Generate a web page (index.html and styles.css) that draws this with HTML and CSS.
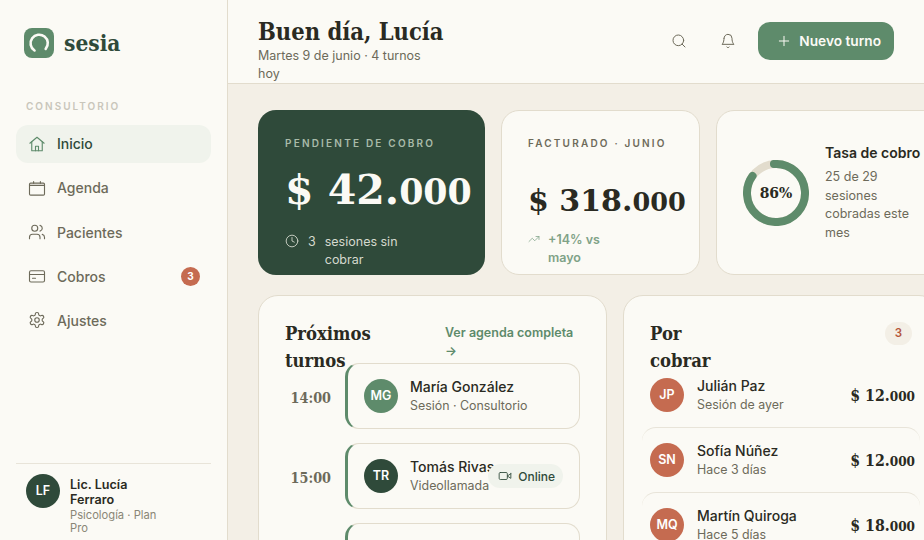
FILE: index.html
```html
<!DOCTYPE html>
<html lang="es">
  <head>
    <meta charset="UTF-8" />
    <meta name="viewport" content="width=device-width, initial-scale=1.0" />
    <title>Sesia</title>
    <link rel="stylesheet" href="styles.css">
  </head>
  <body>
    <aside class="sidebar">
      <div class="brand">
        <div class="brand-mark">
          <svg viewBox="0 0 30 30" width="30" height="30" fill="none" stroke="#fbfaf5" stroke-width="2.6" stroke-linecap="round"><path d="M10.5 22.5a8.6 8.6 0 1 1 11.2-1.6"/></svg>
        </div>
        <span class="brand-name">sesia</span>
      </div>
      <p class="nav-label">CONSULTORIO</p>
      <nav class="nav">
        <a class="nav-item active">
          <svg class="icon" viewBox="0 0 24 24"><path d="M2.5 11 12 3l9.5 8"/><path d="M5 9v12h14V9"/><path d="M10 21v-6h4v6"/></svg>
          Inicio
        </a>
        <a class="nav-item">
          <svg class="icon" viewBox="0 0 24 24"><rect x="2" y="5.5" width="20" height="16" rx="1.5"/><path d="M7.5 3.5v2M16.5 3.5v2M2 8.5h20"/></svg>
          Agenda
        </a>
        <a class="nav-item">
          <svg class="icon" viewBox="0 0 24 24"><path d="M16 21v-2a4 4 0 0 0-4-4H6a4 4 0 0 0-4 4v2"/><circle cx="9" cy="7" r="4"/><path d="M22 21v-2a4 4 0 0 0-3-3.87"/><path d="M16 3.13a4 4 0 0 1 0 7.75"/></svg>
          Pacientes
        </a>
        <a class="nav-item">
          <svg class="icon" viewBox="0 0 24 24"><rect x="2" y="5" width="20" height="15" rx="2"/><path d="M2 10h20M6 15h4"/></svg>
          Cobros
          <span class="nav-badge">3</span>
        </a>
        <a class="nav-item">
          <svg class="icon" viewBox="0 0 24 24"><path d="M12.22 2h-.44a2 2 0 0 0-2 2v.18a2 2 0 0 1-1 1.73l-.43.25a2 2 0 0 1-2 0l-.15-.08a2 2 0 0 0-2.73.73l-.22.38a2 2 0 0 0 .73 2.73l.15.1a2 2 0 0 1 1 1.72v.51a2 2 0 0 1-1 1.74l-.15.09a2 2 0 0 0-.73 2.73l.22.38a2 2 0 0 0 2.73.73l.15-.08a2 2 0 0 1 2 0l.43.25a2 2 0 0 1 1 1.73V20a2 2 0 0 0 2 2h.44a2 2 0 0 0 2-2v-.18a2 2 0 0 1 1-1.73l.43-.25a2 2 0 0 1 2 0l.15.08a2 2 0 0 0 2.73-.73l.22-.39a2 2 0 0 0-.73-2.73l-.15-.08a2 2 0 0 1-1-1.74v-.5a2 2 0 0 1 1-1.74l.15-.09a2 2 0 0 0 .73-2.73l-.22-.38a2 2 0 0 0-2.73-.73l-.15.08a2 2 0 0 1-2 0l-.43-.25a2 2 0 0 1-1-1.73V4a2 2 0 0 0-2-2z"/><circle cx="12" cy="12" r="3"/></svg>
          Ajustes
        </a>
      </nav>
      <div class="profile">
        <div class="avatar dark">LF</div>
        <div class="profile-text">
          <p class="profile-name">Lic. Lucía Ferraro</p>
          <p class="profile-plan">Psicología · Plan Pro</p>
        </div>
      </div>
    </aside>

    <div class="content">
      <header class="topbar">
        <div class="greeting">
          <h1>Buen día, Lucía</h1>
          <p>Martes 9 de junio · 4 turnos hoy</p>
        </div>
        <div class="actions">
          <button class="icon-btn"><svg class="icon" viewBox="0 0 24 24"><circle cx="11" cy="11" r="8"/><path d="m21 21-4.3-4.3"/></svg></button>
          <button class="icon-btn"><svg class="icon" viewBox="0 0 24 24"><path d="M6 8a6 6 0 0 1 12 0c0 7 3 9 3 9H3s3-2 3-9"/><path d="M10.3 21a1.94 1.94 0 0 0 3.4 0"/></svg></button>
          <button class="new-btn"><svg class="icon" viewBox="0 0 24 24"><path d="M5 12h14M12 5v14"/></svg>Nuevo turno</button>
        </div>
      </header>

      <main class="main">
        <section class="stats">
          <div class="stat stat-dark">
            <p class="stat-label">PENDIENTE DE COBRO</p>
            <p class="stat-value">$ 42.<span class="os">000</span></p>
            <div class="stat-note">
              <svg class="icon" viewBox="0 0 24 24"><circle cx="12" cy="12" r="10"/><polyline points="12 6 12 12 16 14"/></svg>
              <span class="note-count">3</span>
              <span class="note-text">sesiones sin cobrar</span>
            </div>
          </div>
          <div class="stat">
            <p class="stat-label">FACTURADO · JUNIO</p>
            <p class="stat-value small">$ 318.<span class="os">000</span></p>
            <div class="stat-note up">
              <svg class="icon" viewBox="0 0 24 24"><polyline points="22 7 13.5 15.5 8.5 10.5 2 17"/><polyline points="16 7 22 7 22 13"/></svg>
              <span>+14% vs mayo</span>
            </div>
          </div>
          <div class="stat stat-rate">
            <div class="ring">
              <svg viewBox="0 0 66 66" width="66" height="66" fill="none" stroke-width="8">
                <circle cx="33" cy="33" r="29" stroke="#e2dccd"/>
                <circle class="ring-value" cx="33" cy="33" r="29" stroke="#5e8b6b" stroke-linecap="round" stroke-dasharray="156.7 182.2"/>
              </svg>
              <span class="ring-text">86%</span>
            </div>
            <div class="rate-text">
              <h3>Tasa de cobro</h3>
              <p>25 de 29 sesiones cobradas este mes</p>
            </div>
          </div>
        </section>

        <section class="panels">
          <div class="panel">
            <div class="panel-head">
              <h2 class="panel-title">Próximos turnos</h2>
              <a class="panel-link">Ver agenda completa →</a>
            </div>
            <div class="appts">
              <div class="appt">
                <span class="appt-time"><span class="os">14:00</span></span>
                <div class="appt-card">
                  <div class="avatar green">MG</div>
                  <div class="appt-info">
                    <p class="name">María González</p>
                    <p class="sub">Sesión · Consultorio</p>
                  </div>
                </div>
              </div>
              <div class="appt">
                <span class="appt-time"><span class="os">15:00</span></span>
                <div class="appt-card">
                  <div class="avatar dark">TR</div>
                  <div class="appt-info">
                    <p class="name">Tomás Rivas</p>
                    <p class="sub">Videollamada</p>
                  </div>
                  <span class="pill">
                    <svg class="icon" viewBox="0 0 24 24"><path d="m22 8-6 4 6 4V8Z"/><rect x="2" y="6" width="14" height="12" rx="2"/></svg>
                    Online
                  </span>
                </div>
              </div>
              <div class="appt">
                <span class="appt-time"></span>
                <div class="appt-card"></div>
              </div>
            </div>
          </div>

          <div class="panel panel-side">
            <div class="panel-head">
              <h2 class="panel-title narrow">Por cobrar</h2>
              <span class="count">3</span>
            </div>
            <div class="debts">
              <div class="debt">
                <div class="avatar clay">JP</div>
                <div class="debt-info">
                  <p class="name">Julián Paz</p>
                  <p class="sub">Sesión de ayer</p>
                </div>
                <span class="amount">$ 12.<span class="os">000</span></span>
              </div>
              <div class="debt">
                <div class="avatar clay">SN</div>
                <div class="debt-info">
                  <p class="name">Sofía Núñez</p>
                  <p class="sub">Hace 3 días</p>
                </div>
                <span class="amount">$ 12.<span class="os">000</span></span>
              </div>
              <div class="debt">
                <div class="avatar clay">MQ</div>
                <div class="debt-info">
                  <p class="name">Martín Quiroga</p>
                  <p class="sub">Hace 5 días</p>
                </div>
                <span class="amount">$ 18.<span class="os">000</span></span>
              </div>
            </div>
          </div>
        </section>
      </main>
    </div>
  </body>
</html>
```

FILE: styles.css
```css
* {
  margin: 0;
  padding: 0;
  box-sizing: border-box;
}
html,
body {
  height: 100%;
  overflow: hidden;
}
body {
  display: flex;
  font-family: "Inter", "Liberation Sans", sans-serif;
  color: #2a2a22;
  background: #f3efe6;
}
.icon {
  width: 18px;
  height: 18px;
  fill: none;
  stroke: currentColor;
  stroke-width: 1.5;
  stroke-linecap: round;
  stroke-linejoin: round;
  flex-shrink: 0;
}

/* sidebar */
.sidebar {
  width: 228px;
  flex-shrink: 0;
  display: flex;
  flex-direction: column;
  padding: 28px 16px 0;
  background: #fbfaf5;
  border-right: 1px solid #e2dccd;
}
.brand {
  display: flex;
  align-items: center;
  gap: 10px;
  padding-left: 8px;
}
.brand-mark {
  width: 30px;
  height: 30px;
  border-radius: 8px;
  background: #5e8b6b;
}
.brand-mark svg {
  display: block;
}
.brand-name {
  font-family: "DejaVu Serif Condensed", "DejaVu Serif", serif;
  font-size: 22.5px;
  font-weight: 700;
  color: #2f4a3a;
}
.nav-label {
  margin-top: 42px;
  padding-left: 10px;
  font-size: 10px;
  font-weight: 600;
  letter-spacing: 2px;
  color: #c9c6bb;
}
.nav {
  display: flex;
  flex-direction: column;
  gap: 6px;
  margin-top: 12.6px;
}
.nav-item {
  display: flex;
  align-items: center;
  gap: 11px;
  height: 38.2px;
  padding: 0 11px 0 12px;
  border-radius: 12px;
  font-size: 14px;
  font-weight: 500;
  color: #6d6a5a;
}
.nav-item.active {
  background: #f0f3ec;
  color: #2f4a3a;
}
.nav-item.active .icon {
  color: #5e8b6b;
}
.nav-badge {
  width: 19px;
  height: 19px;
  margin-left: auto;
  border-radius: 50%;
  background: #c56b50;
  color: #fff;
  font-size: 10px;
  font-weight: 700;
  line-height: 19px;
  text-align: center;
}
.profile {
  display: flex;
  gap: 10px;
  margin-top: auto;
  margin-bottom: 5px;
  padding: 10px 10px 0;
  border-top: 1px solid #e8e4d9;
}
.profile-text {
  width: 96px;
  margin-top: 3px;
}
.profile-name {
  font-size: 12.6px;
  font-weight: 600;
  line-height: 15px;
  color: #2a2a22;
}
.profile-plan {
  font-size: 11.2px;
  line-height: 13px;
  margin-top: 2px;
  color: #8a8676;
}
.avatar {
  width: 34px;
  height: 34px;
  flex-shrink: 0;
  border-radius: 50%;
  color: #fff;
  font-size: 12.5px;
  font-weight: 600;
  line-height: 34px;
  text-align: center;
}
.avatar.dark {
  background: #2f4a3a;
}
.avatar.green {
  background: #5e8b6b;
}
.avatar.clay {
  background: #c56b50;
}

/* topbar */
.content {
  flex: 1;
  min-width: 0;
  display: flex;
  flex-direction: column;
}
.topbar {
  height: 84px;
  flex-shrink: 0;
  display: flex;
  align-items: flex-start;
  justify-content: space-between;
  padding: 17px 30px 0;
  background: #fbfaf5;
  border-bottom: 1px solid #e2dccd;
}
.greeting {
  width: 170px;
}
.greeting h1 {
  font-family: "DejaVu Serif Condensed", "DejaVu Serif", serif;
  font-size: 23.5px;
  font-weight: 700;
  line-height: 30px;
  white-space: nowrap;
}
.greeting p {
  font-size: 12.5px;
  line-height: 18px;
  color: #6d6a5a;
}
.actions {
  display: flex;
  align-items: center;
  gap: 11px;
  margin-top: 5px;
}
.icon-btn {
  width: 38px;
  height: 38px;
  display: flex;
  align-items: center;
  justify-content: center;
  border: 0;
  background: none;
  color: #6d6a5a;
}
.icon-btn .icon {
  width: 16px;
  height: 16px;
}
.new-btn {
  display: flex;
  align-items: center;
  gap: 7px;
  height: 38px;
  padding: 0 13px 0 18px;
  border: 0;
  border-radius: 12px;
  background: #5e8b6b;
  color: #fbfaf5;
  font-family: inherit;
  font-size: 13.7px;
  font-weight: 600;
}
.new-btn .icon {
  width: 16px;
  height: 16px;
}

/* main */
.main {
  flex: 1;
  min-height: 0;
  overflow: hidden;
  padding: 26px 0 0 30px;
}
.stats {
  display: grid;
  grid-template-columns: 227px 199px 229px;
  gap: 16px;
  height: 165px;
}
.stat {
  padding: 26px 26px 0;
  border: 1px solid #e2dccd;
  border-radius: 18px;
  background: #fbfaf5;
}
.stat-dark {
  padding: 27px 27px 0;
  border: 0;
  background: #2f4a3a;
  color: #fbfaf5;
}
.stat-label {
  font-size: 10px;
  font-weight: 600;
  letter-spacing: 2.2px;
  line-height: 12px;
  color: #6d6a5a;
}
.stat-dark .stat-label {
  color: #a9bba9;
}
.stat-value {
  margin-top: 16px;
  font-family: "DejaVu Serif", serif;
  font-size: 41px;
  font-weight: 700;
  line-height: 50px;
  white-space: nowrap;
}
.stat-value.small {
  margin-top: 28px;
  font-size: 30px;
  line-height: 48px;
}
.os {
  font-size: 0.85em;
}
.stat-note {
  display: flex;
  align-items: flex-start;
  gap: 9px;
  margin-top: 16px;
  font-size: 12.5px;
  line-height: 18px;
  color: #d5d9ce;
}
.stat-note .icon {
  width: 14px;
  height: 14px;
  margin-top: 1px;
}
.note-text {
  width: 90px;
}
.stat-note.up {
  gap: 8px;
  color: #7fa287;
  font-weight: 600;
  width: 95px;
  margin-top: 5px;
}
.stat-note.up .icon {
  width: 12px;
  height: 12px;
  margin-top: 2px;
}
.stat-rate {
  display: flex;
  align-items: center;
  gap: 16px;
  padding: 0 26px;
}
.ring {
  position: relative;
  width: 66px;
  height: 66px;
  flex-shrink: 0;
}
.ring svg {
  display: block;
}
.ring-value {
  transform: rotate(-94deg);
  transform-origin: center;
}
.ring-text {
  position: absolute;
  inset: 0;
  font-family: "DejaVu Serif Condensed", "DejaVu Serif", serif;
  font-size: 15.5px;
  font-weight: 700;
  line-height: 66px;
  text-align: center;
}
.rate-text {
  margin-top: 1px;
}
.rate-text h3 {
  font-size: 14px;
  font-weight: 600;
  line-height: 18px;
  white-space: nowrap;
}
.rate-text p {
  margin-top: 6.5px;
  font-size: 12.5px;
  line-height: 18.4px;
  color: #6d6a5a;
}

/* panels */
.panels {
  display: grid;
  grid-template-columns: 349px 316px;
  gap: 16px;
  margin-top: 20px;
}
.panel {
  height: 300px;
  padding: 23px 26px 0;
  border: 1px solid #e2dccd;
  border-radius: 20px;
  background: #fbfaf5;
}
.panel-head {
  display: flex;
  align-items: flex-start;
  justify-content: space-between;
  height: 44px;
}
.panel-title {
  width: 110px;
  margin-top: 1px;
  font-family: "DejaVu Serif Condensed", "DejaVu Serif", serif;
  font-size: 18.3px;
  font-weight: 700;
  line-height: 27px;
}
.panel-title.narrow {
  width: 70px;
}
.panel-link {
  width: 135px;
  margin-top: 5px;
  font-size: 12.5px;
  font-weight: 600;
  line-height: 18px;
  color: #5e8b6b;
}
.count {
  width: 27px;
  height: 23px;
  margin-top: 3px;
  border-radius: 12px;
  background: #f3efe6;
  color: #b5553a;
  font-size: 11.5px;
  font-weight: 600;
  line-height: 23px;
  text-align: center;
}
.appts {
  display: flex;
  flex-direction: column;
  gap: 14px;
}
.appt {
  display: flex;
  align-items: center;
  gap: 14px;
}
.appt-time {
  width: 46px;
  flex-shrink: 0;
  padding-top: 2px;
  font-family: "DejaVu Serif Condensed", "DejaVu Serif", serif;
  font-size: 16.8px;
  font-weight: 700;
  color: #6d6a5a;
  text-align: right;
}
.appt-card {
  flex: 1;
  min-width: 0;
  height: 66px;
  display: flex;
  align-items: center;
  gap: 12px;
  padding: 0 16px;
  border: 1px solid #e2dccd;
  border-left: 3px solid #5e8b6b;
  border-radius: 14px;
}
.appt-info {
  flex: 1;
  min-width: 0;
  white-space: nowrap;
}
.name {
  font-size: 14px;
  font-weight: 500;
  line-height: 19px;
  color: #2a2a22;
}
.sub {
  font-size: 12.4px;
  line-height: 19px;
  color: #6d6a5a;
}
.pill {
  display: flex;
  align-items: center;
  gap: 6px;
  height: 24px;
  flex-shrink: 0;
  padding: 0 8px 0 10px;
  border-radius: 12px;
  background: #f0f3ec;
  color: #2f4a3a;
  font-size: 12px;
  font-weight: 500;
  position: relative;
}
.pill .icon {
  width: 14px;
  height: 14px;
}
.debts {
  margin: -1px -8px 0;
}
.debt {
  display: flex;
  align-items: center;
  gap: 13px;
  padding: 13px 5px 13px 8px;
  border-top: 1px solid #e8e4d9;
  border-radius: 14px;
}
.debt:first-child {
  border-top-color: transparent;
}
.debt-info {
  flex: 1;
  min-width: 0;
  white-space: nowrap;
}
.amount {
  font-family: "DejaVu Serif Condensed", "DejaVu Serif", serif;
  font-size: 15.8px;
  font-weight: 700;
  white-space: nowrap;
}
```
